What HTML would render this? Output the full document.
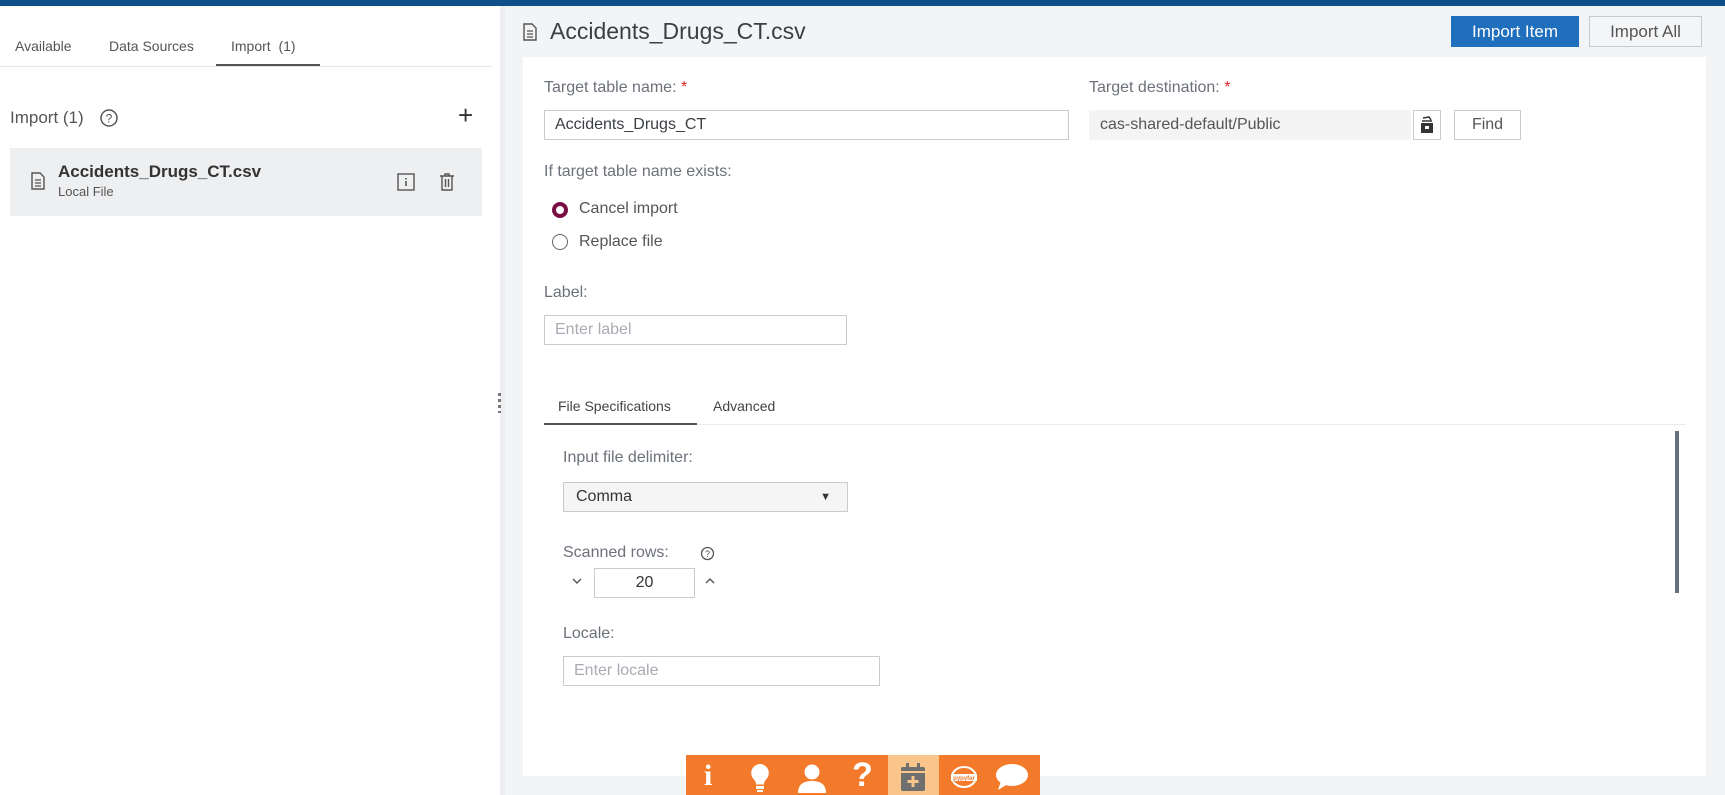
<!DOCTYPE html>
<html><head><meta charset="utf-8"><style>
*{margin:0;padding:0;box-sizing:border-box}
body{width:1725px;height:795px;overflow:hidden;background:#f3f4f6;font-family:"Liberation Sans",sans-serif;color:#3b3f45;position:relative}
.a{position:absolute}
.lbl{font-size:16px;color:#6c717a}
.inp{position:absolute;border:1px solid #c8cbd0;background:#fff;font-size:16px;padding-left:10px;display:flex;align-items:center}
.star{color:#d9262e}
</style></head><body>
<div class="a" style="left:0;top:0;width:1725px;height:6px;background:#0e4f8a"></div>
<!-- left panel -->
<div class="a" style="left:0;top:6px;width:500px;height:789px;background:#fff"></div>
<div class="a" style="left:500px;top:6px;width:5px;height:789px;background:#eceef1"></div>
<div class="a" style="left:15px;top:38px;font-size:14px;color:#555">Available</div>
<div class="a" style="left:109px;top:38px;font-size:14px;color:#555">Data Sources</div>
<div class="a" style="left:231px;top:38px;font-size:14px;color:#555">Import&nbsp;&nbsp;(1)</div>
<div class="a" style="left:0;top:66px;width:492px;height:1px;background:#e6e7ea"></div>
<div class="a" style="left:216px;top:64px;width:104px;height:2px;background:#555"></div>
<div class="a" style="left:10px;top:108px;font-size:17px;color:#555">Import (1)</div>
<svg class="a" style="left:99px;top:108px" width="20" height="20" viewBox="0 0 20 20"><circle cx="10" cy="10" r="8" fill="none" stroke="#555" stroke-width="1.5"/><text x="10" y="14.5" font-size="12" text-anchor="middle" fill="#555" font-family="Liberation Sans">?</text></svg>
<div class="a" style="left:458px;top:100px;font-size:26px;color:#333">+</div>
<div class="a" style="left:10px;top:148px;width:472px;height:68px;background:#eeeff1"></div>
<svg class="a" style="left:30px;top:172px" width="16" height="18" viewBox="0 0 16 18"><path d="M2 1h8l4 4v12H2z" fill="none" stroke="#555" stroke-width="1.4"/><path d="M5 8h6M5 11h6M5 14h6" stroke="#555" stroke-width="1.2"/></svg>
<div class="a" style="left:58px;top:162px;font-size:17px;font-weight:bold;color:#333">Accidents_Drugs_CT.csv</div>
<div class="a" style="left:58px;top:184px;font-size:13px;color:#555">Local File</div>
<svg class="a" style="left:397px;top:173px" width="18" height="18" viewBox="0 0 18 18"><rect x="1" y="1" width="16" height="16" fill="none" stroke="#555" stroke-width="1.4"/><path d="M9 5v1.5M9 8v5" stroke="#555" stroke-width="1.6"/></svg>
<svg class="a" style="left:439px;top:172px" width="16" height="19" viewBox="0 0 16 19"><path d="M1 4h14M6 4V2h4v2M3 4v14h10V4M6.5 7v8M9.5 7v8" fill="none" stroke="#555" stroke-width="1.4"/></svg>
<!-- right header -->
<svg class="a" style="left:522px;top:23px" width="16" height="18" viewBox="0 0 16 18"><path d="M2 1h8l4 4v12H2z" fill="none" stroke="#555" stroke-width="1.4"/><path d="M5 8h6M5 11h6M5 14h6" stroke="#555" stroke-width="1.2"/></svg>
<div class="a" style="left:550px;top:18px;font-size:23px;color:#3b3f45">Accidents_Drugs_CT.csv</div>
<div class="a" style="left:1451px;top:16px;width:128px;height:31px;background:#1f6fbd;color:#fff;font-size:17px;display:flex;align-items:center;justify-content:center">Import Item</div>
<div class="a" style="left:1589px;top:16px;width:113px;height:31px;background:#f4f5f6;border:1px solid #c6c9cd;color:#555;font-size:17px;display:flex;align-items:center;justify-content:center">Import All</div>
<!-- card -->
<div class="a" style="left:523px;top:57px;width:1183px;height:719px;background:#fff"></div>
<div class="a lbl" style="left:544px;top:79px">Target table name: <span class="star">*</span></div>
<div class="inp" style="left:544px;top:110px;width:525px;height:30px;color:#3b3f45">Accidents_Drugs_CT</div>
<div class="a lbl" style="left:1089px;top:79px">Target destination: <span class="star">*</span></div>
<div class="a" style="left:1089px;top:110px;width:322px;height:30px;background:#f4f4f5;font-size:16px;padding-left:11px;display:flex;align-items:center;color:#555">cas-shared-default/Public</div>
<div class="a" style="left:1413px;top:110px;width:28px;height:30px;border:1px solid #c8cbd0;background:#fff"></div>
<svg class="a" style="left:1419px;top:116px" width="16" height="18" viewBox="0 0 16 18"><path d="M4 2l6 -1l2 3" fill="none" stroke="#333" stroke-width="1.5"/><path d="M3 5h10" stroke="#333" stroke-width="1.5"/><rect x="2" y="7" width="12" height="10" fill="#333"/><rect x="6" y="10" width="4" height="3" fill="#fff"/></svg>
<div class="a" style="left:1454px;top:110px;width:67px;height:30px;border:1px solid #c8cbd0;font-size:16px;color:#555;display:flex;align-items:center;justify-content:center">Find</div>
<div class="a lbl" style="left:544px;top:163px">If target table name exists:</div>
<div class="a" style="left:552px;top:202px;width:16px;height:16px;border-radius:50%;border:4px solid #7a0f45"></div>
<div class="a" style="left:579px;top:200px;font-size:16px;color:#555">Cancel import</div>
<div class="a" style="left:552px;top:234px;width:16px;height:16px;border-radius:50%;border:1.5px solid #666"></div>
<div class="a" style="left:579px;top:233px;font-size:16px;color:#555">Replace file</div>
<div class="a lbl" style="left:544px;top:284px">Label:</div>
<div class="inp" style="left:544px;top:315px;width:303px;height:30px;color:#a8acb2">Enter label</div>
<div class="a" style="left:498px;top:393px;width:3px;height:20px;background:repeating-linear-gradient(#777 0 3px,transparent 3px 6px)"></div>
<div class="a" style="left:558px;top:398px;font-size:14px;color:#444">File Specifications</div>
<div class="a" style="left:713px;top:398px;font-size:14px;color:#444">Advanced</div>
<div class="a" style="left:544px;top:424px;width:1142px;height:1px;background:#ebecee"></div>
<div class="a" style="left:544px;top:423px;width:153px;height:2px;background:#555"></div>
<div class="a" style="left:1675px;top:431px;width:4px;height:162px;background:#666f80"></div>
<div class="a lbl" style="left:563px;top:449px">Input file delimiter:</div>
<div class="inp" style="left:563px;top:482px;width:285px;height:30px;background:#f5f5f6;color:#333;padding-left:12px">Comma<span style="position:absolute;right:16px;font-size:11px">▼</span></div>
<div class="a lbl" style="left:563px;top:544px">Scanned rows:</div>
<svg class="a" style="left:700px;top:546px" width="15" height="15" viewBox="0 0 15 15"><circle cx="7.5" cy="7.5" r="6" fill="none" stroke="#555" stroke-width="1.3"/><text x="7.5" y="11" font-size="9" text-anchor="middle" fill="#555" font-family="Liberation Sans">?</text></svg>
<svg class="a" style="left:571px;top:576px" width="12" height="10" viewBox="0 0 12 10"><path d="M2 3l4 4l4-4" fill="none" stroke="#555" stroke-width="1.4"/></svg>
<div class="inp" style="left:594px;top:568px;width:101px;height:30px;justify-content:center;padding:0;color:#333">20</div>
<svg class="a" style="left:704px;top:576px" width="12" height="10" viewBox="0 0 12 10"><path d="M2 7l4-4l4 4" fill="none" stroke="#555" stroke-width="1.4"/></svg>
<div class="a lbl" style="left:563px;top:625px">Locale:</div>
<div class="inp" style="left:563px;top:656px;width:317px;height:30px;color:#a8acb2">Enter locale</div>
<!-- orange toolbar -->
<div class="a" style="left:686px;top:755px;width:354px;height:40px;background:#f37a2b"></div>
<div class="a" style="left:888px;top:755px;width:51px;height:40px;background:#f9c58a"></div>
<div class="a" style="left:704px;top:759px;font-size:30px;font-weight:bold;color:#fff;font-family:'Liberation Serif',serif">i</div>
<svg class="a" style="left:749px;top:763px" width="22" height="30" viewBox="0 0 22 30"><path d="M11 1a9 9 0 0 0-6 15.5c1.5 1.5 2 3 2 5h8c0-2 .5-3.5 2-5A9 9 0 0 0 11 1z" fill="#fff"/><rect x="7" y="23" width="8" height="3" fill="#fff"/><rect x="8" y="27" width="6" height="2" fill="#fff"/></svg>
<svg class="a" style="left:797px;top:763px" width="30" height="30" viewBox="0 0 30 30"><circle cx="15" cy="9" r="7.5" fill="#fff"/><path d="M1 30c0-9 6-12 14-12s14 3 14 12z" fill="#fff"/></svg>
<div class="a" style="left:852px;top:756px;font-size:34px;font-weight:bold;color:#fff">?</div>
<svg class="a" style="left:900px;top:762px" width="26" height="30" viewBox="0 0 26 30"><rect x="1" y="5" width="24" height="24" rx="2" fill="#6f6f6f"/><rect x="6" y="1" width="3" height="6" fill="#6f6f6f"/><rect x="17" y="1" width="3" height="6" fill="#6f6f6f"/><rect x="1" y="9" width="24" height="2" fill="#f9c58a"/><path d="M13 14v11M7.5 19.5h11" stroke="#f9c58a" stroke-width="3"/></svg>
<svg class="a" style="left:948px;top:762px" width="32" height="30" viewBox="0 0 32 30"><ellipse cx="16" cy="15" rx="12" ry="10" fill="none" stroke="#fff" stroke-width="2"/><rect x="3" y="12" width="26" height="7" fill="#fff"/><text x="16" y="18" font-size="6" text-anchor="middle" fill="#f37a2b" font-family="Liberation Sans" font-weight="bold">pypyfar</text></svg>
<svg class="a" style="left:995px;top:763px" width="34" height="30" viewBox="0 0 34 30"><ellipse cx="17" cy="12" rx="16" ry="11" fill="#fff"/><path d="M6 18l-3 9l10-6z" fill="#fff"/></svg>
</body></html>
